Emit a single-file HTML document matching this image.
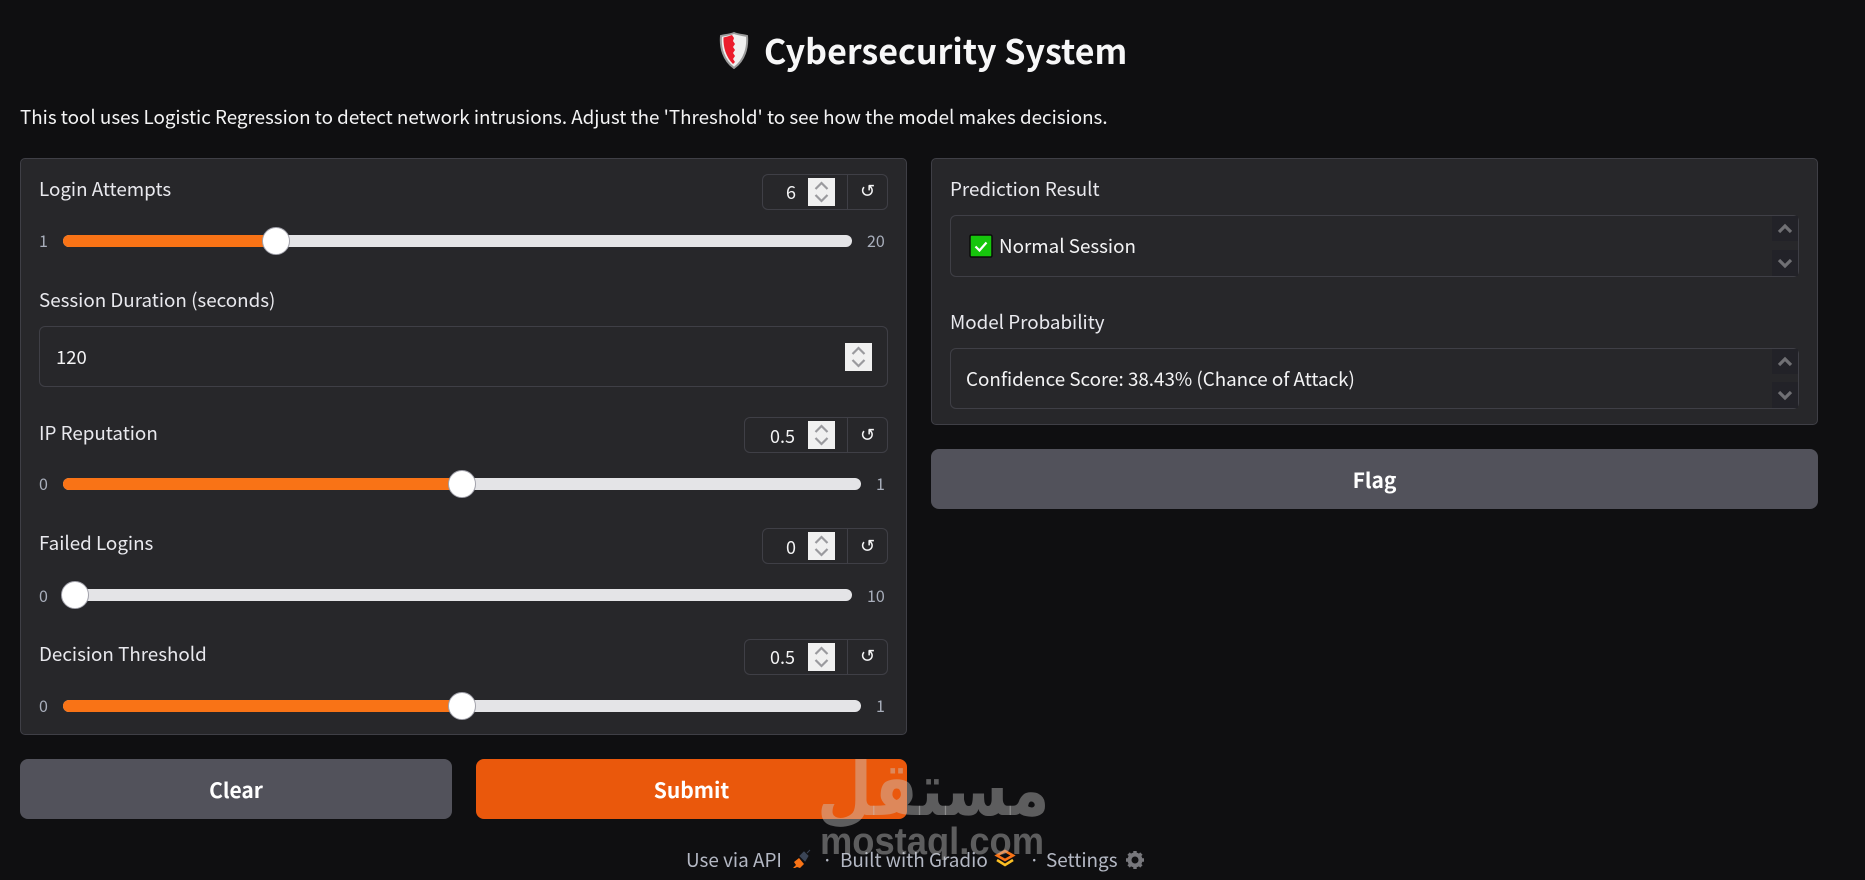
<!DOCTYPE html>
<html><head><meta charset="utf-8">
<style>
*{box-sizing:border-box;margin:0;padding:0}
html,body{width:1865px;height:880px;overflow:hidden;background:#0f0f11}
body{position:relative;font-family:"Noto Sans CJK JP","Liberation Sans",sans-serif;color:#f4f4f5;font-size:18.8px}
.a{position:absolute;white-space:nowrap;line-height:1}
.panel{position:absolute;background:#27272a;border:1px solid #3f3f46;border-radius:5px}
.box{position:absolute;border:1px solid #3f3f46;border-radius:6px}
.track{position:absolute;height:12px;border-radius:6px;background:#e4e4e7}
.fill{position:absolute;left:0;top:0;height:12px;border-radius:6px 0 0 6px;background:#f97316}
.thumb{position:absolute;width:28px;height:28px;border-radius:50%;background:#fff;border:1px solid #a1a1aa;top:-8px}
.lbl{color:#e9e9ee}
.small{font-size:16px;color:#a9afbc}
.spin{position:absolute;width:27px;height:28px;background:#f0f0f0}
.div{position:absolute;width:1px;background:#3f3f46}
.rs{position:absolute;font-family:"DejaVu Sans",sans-serif;font-size:18px;line-height:1;color:#f4f4f5}
.sb{position:absolute;width:26px;background:#222228}
.btn{position:absolute;border-radius:8px;font-weight:700;font-size:21px;display:flex;align-items:center;justify-content:center;color:#fff;line-height:1;padding-top:2px}
.foot{color:#b4b8c4;font-size:18.9px}
.wm{position:absolute;font-family:"DejaVu Sans",sans-serif;font-weight:700;color:rgba(202,202,202,.42);white-space:nowrap;line-height:1}
</style></head><body>

<svg class="a" style="left:718px;top:31px" width="32" height="38" viewBox="0 0 32 38">
<path d="M16 2C11 4 6 4 3 5 2 16 5 29 16 37 27 29 30 16 29 5 26 4 21 4 16 2Z" fill="#f0f0f0" stroke="#9a9a9a" stroke-width="2"/>
<path d="M14 4C11 5 8 6 5.500 6.500 5 16 8 26 15 33l2-2-2-3 2-3-2-3 2-3-2-3 2-3-2-3 1-3Z" fill="#ec1c2c"/>
</svg>
<div class="a" style="left:764px;top:26px;font-size:34px;font-weight:700;line-height:48px;color:#f7f7f8">Cybersecurity System</div>
<div class="a" style="left:20px;top:105px;font-size:18.8px;line-height:24px;color:#f4f4f5">This tool uses Logistic Regression to detect network intrusions. Adjust the 'Threshold' to see how the model makes decisions.</div>

<!-- left panel -->
<div class="panel" style="left:20px;top:158px;width:887px;height:577px"></div>

<div class="a lbl" style="left:39px;top:177px;line-height:24px">Login Attempts</div>
<div class="box" style="left:762px;top:174px;width:126px;height:36px"></div>
<div class="div" style="left:847px;top:174px;height:36px"></div>
<div class="a" style="left:786px;top:181px;line-height:22px;font-size:18px">6</div>
<div class="spin" style="left:808px;top:178px"><svg width="27" height="28"><path d="M7.500 11l6-6 6 6M7.500 17l6 6 6-6" fill="none" stroke="#9a9a9e" stroke-width="2.200"/></svg></div>
<div class="rs" style="left:860px;top:183px">↺</div>
<div class="a small" style="left:39px;top:230px;line-height:20px">1</div>
<div class="track" style="left:63px;top:235px;width:789px"><div class="fill" style="width:213px"></div><div class="thumb" style="left:199px"></div></div>
<div class="a small" style="left:867px;top:230px;line-height:20px">20</div>

<div class="a lbl" style="left:39px;top:288px;line-height:24px">Session Duration (seconds)</div>
<div class="box" style="left:39px;top:326px;width:849px;height:61px"></div>
<div class="a" style="left:56px;top:346px;line-height:22px;font-size:18.500px">120</div>
<div class="spin" style="left:845px;top:343px"><svg width="27" height="28"><path d="M7.500 11l6-6 6 6M7.500 17l6 6 6-6" fill="none" stroke="#9a9a9e" stroke-width="2.200"/></svg></div>

<div class="a lbl" style="left:39px;top:421px;line-height:24px">IP Reputation</div>
<div class="box" style="left:744px;top:417px;width:144px;height:36px"></div>
<div class="div" style="left:847px;top:417px;height:36px"></div>
<div class="a" style="left:770px;top:425px;line-height:22px;font-size:18px">0.5</div>
<div class="spin" style="left:808px;top:421px"><svg width="27" height="28"><path d="M7.500 11l6-6 6 6M7.500 17l6 6 6-6" fill="none" stroke="#9a9a9e" stroke-width="2.200"/></svg></div>
<div class="rs" style="left:860px;top:427px">↺</div>
<div class="a small" style="left:39px;top:473px;line-height:20px">0</div>
<div class="track" style="left:63px;top:478px;width:798px"><div class="fill" style="width:399px"></div><div class="thumb" style="left:385px"></div></div>
<div class="a small" style="left:876px;top:473px;line-height:20px">1</div>

<div class="a lbl" style="left:39px;top:531px;line-height:24px">Failed Logins</div>
<div class="box" style="left:762px;top:528px;width:126px;height:36px"></div>
<div class="div" style="left:847px;top:528px;height:36px"></div>
<div class="a" style="left:786px;top:536px;line-height:22px;font-size:18px">0</div>
<div class="spin" style="left:808px;top:532px"><svg width="27" height="28"><path d="M7.500 11l6-6 6 6M7.500 17l6 6 6-6" fill="none" stroke="#9a9a9e" stroke-width="2.200"/></svg></div>
<div class="rs" style="left:860px;top:538px">↺</div>
<div class="a small" style="left:39px;top:585px;line-height:20px">0</div>
<div class="track" style="left:63px;top:589px;width:789px"><div class="thumb" style="left:-2px"></div></div>
<div class="a small" style="left:867px;top:585px;line-height:20px">10</div>

<div class="a lbl" style="left:39px;top:642px;line-height:24px">Decision Threshold</div>
<div class="box" style="left:744px;top:639px;width:144px;height:36px"></div>
<div class="div" style="left:847px;top:639px;height:36px"></div>
<div class="a" style="left:770px;top:646px;line-height:22px;font-size:18px">0.5</div>
<div class="spin" style="left:808px;top:643px"><svg width="27" height="28"><path d="M7.500 11l6-6 6 6M7.500 17l6 6 6-6" fill="none" stroke="#9a9a9e" stroke-width="2.200"/></svg></div>
<div class="rs" style="left:860px;top:648px">↺</div>
<div class="a small" style="left:39px;top:695px;line-height:20px">0</div>
<div class="track" style="left:63px;top:700px;width:798px"><div class="fill" style="width:399px"></div><div class="thumb" style="left:385px"></div></div>
<div class="a small" style="left:876px;top:695px;line-height:20px">1</div>

<!-- right panel -->
<div class="panel" style="left:931px;top:158px;width:887px;height:267px"></div>
<div class="a lbl" style="left:950px;top:177px;line-height:24px">Prediction Result</div>
<div class="box" style="left:950px;top:215px;width:849px;height:62px"></div>
<div class="sb" style="left:1772px;top:216px;height:25px"><svg width="26" height="25"><path d="M7 16l6-6 6 6" fill="none" stroke="#707074" stroke-width="3.200"/></svg></div>
<div class="sb" style="left:1772px;top:250px;height:26px"><svg width="26" height="26"><path d="M7 10l6 6 6-6" fill="none" stroke="#707074" stroke-width="3.200"/></svg></div>
<svg class="a" style="left:969px;top:234px" width="24" height="24"><rect x="1" y="1" width="22" height="22" rx="1.500" fill="#16c60c" stroke="#0b0b0b" stroke-width="1.500"/><path d="M6.500 12.500l4 4 7-8" fill="none" stroke="#fff" stroke-width="2.200"/></svg>
<div class="a" style="left:999px;top:234px;line-height:24px">Normal Session</div>

<div class="a lbl" style="left:950px;top:310px;line-height:24px">Model Probability</div>
<div class="box" style="left:950px;top:348px;width:849px;height:61px"></div>
<div class="sb" style="left:1772px;top:349px;height:25px"><svg width="26" height="25"><path d="M7 16l6-6 6 6" fill="none" stroke="#707074" stroke-width="3.200"/></svg></div>
<div class="sb" style="left:1772px;top:382px;height:26px"><svg width="26" height="26"><path d="M7 10l6 6 6-6" fill="none" stroke="#707074" stroke-width="3.200"/></svg></div>
<div class="a" style="left:966px;top:367px;line-height:24px">Confidence Score: 38.43% (Chance of Attack)</div>

<div class="btn" style="left:931px;top:449px;width:887px;height:60px;background:#52525b">Flag</div>
<div class="btn" style="left:20px;top:759px;width:432px;height:60px;background:#52525b">Clear</div>
<div class="btn" style="left:476px;top:759px;width:431px;height:60px;background:#ea580c">Submit</div>

<!-- footer -->
<div class="a foot" style="left:686px;top:848px;line-height:24px">Use via API</div>
<svg class="a" style="left:790px;top:848px" width="22" height="22" viewBox="0 0 22 22"><path d="M3 20l3-3-2-3 5-4 5 6-4 4-3-1-2 1Z" fill="#f97316"/><path d="M10 8l4-4 4 4-3 5Z M17 5l3-3" fill="#3b4557" stroke="#3b4557"/></svg>
<div class="a foot" style="left:822px;top:848px;line-height:24px">·</div>
<div class="a foot" style="left:840px;top:848px;line-height:24px">Built with Gradio</div>
<svg class="a" style="left:994px;top:849px" width="22" height="20" viewBox="0 0 22 20"><path d="M11 2l8 4.500-8 4.500-8-4.500Z" fill="none" stroke="#f97316" stroke-width="2.600"/><path d="M3 11l8 5 8-5" fill="none" stroke="#fbbf24" stroke-width="2.600"/></svg>
<div class="a foot" style="left:1029px;top:848px;line-height:24px">·</div>
<div class="a foot" style="left:1046px;top:848px;line-height:24px">Settings</div>
<svg class="a" style="left:1125px;top:850px" width="20" height="20" viewBox="0 0 20 20"><circle cx="10" cy="10" r="5.500" fill="none" stroke="#77777c" stroke-width="4"/><path d="M10 1v3M10 16v3M1 10h3M16 10h3M3.600 3.600l2.200 2.200M14.200 14.200l2.200 2.200M3.600 16.400l2.200-2.200M14.200 5.800l2.200-2.200" stroke="#77777c" stroke-width="3.400"/></svg>

<!-- watermark -->
<div class="wm" dir="rtl" lang="ar" style="right:815px;top:736px;font-size:80px;line-height:100px;transform:scale(.795,.92);transform-origin:100% 100%">مستقل</div>
<svg class="a" style="left:810px;top:750px" width="250" height="110" viewBox="0 0 250 110">
<text x="10" y="104" font-family="Liberation Sans" font-weight="700" font-size="38" textLength="224" lengthAdjust="spacingAndGlyphs" fill="#cacaca" fill-opacity=".42">mostaql.com</text>
</svg>
</body></html>
